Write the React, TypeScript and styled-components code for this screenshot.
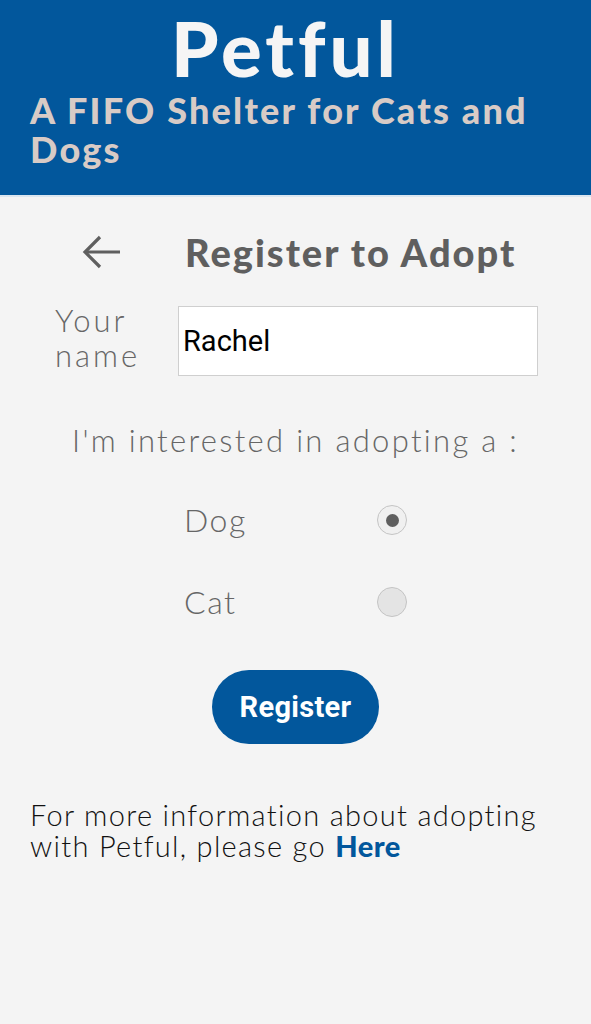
import React from "react";
import styled, { createGlobalStyle } from "styled-components";

const Global = createGlobalStyle`
  html, body { margin: 0; padding: 0; background: #f4f4f4; }
  body { font-family: "Lato", "Open Sans", sans-serif; }
`;

const Page = styled.div`
  width: 591px;
  min-height: 1024px;
  background: #f4f4f4;
`;

const Header = styled.header`
  background: #02579c;
  height: 197px;
  box-sizing: border-box;
  padding: 5px 30px 0;
  border-bottom: 2px solid #dbe6f0;
`;

const Title = styled.h1`
  margin: 0;
  padding-right: 20px;
  text-align: center;
  color: #f5f5f5;
  font-family: "Lato", sans-serif;
  font-weight: 900;
  font-size: 76px;
  line-height: 86px;
  letter-spacing: 4px;
`;

const Subtitle = styled.h2`
  margin: 0;
  color: #d8cbc6;
  font-family: "Lato", sans-serif;
  font-weight: 900;
  font-size: 36px;
  line-height: 39px;
  letter-spacing: 2.2px;
`;

const Main = styled.main`
  display: flex;
  flex-direction: column;
  align-items: center;
  padding-top: 27px;
`;

const TitleRow = styled.div`
  display: flex;
  align-items: center;
  width: 100%;
  box-sizing: border-box;
  padding-left: 80px;
  gap: 63px;
  height: 56px;
`;

const BackButton = styled.button`
  background: none;
  border: 0;
  padding: 0;
  width: 42px;
  height: 42px;
  display: flex;
  align-items: center;
  justify-content: center;
  color: #5f5f5f;
  cursor: pointer;
`;

const PageTitle = styled.h2`
  margin: 0;
  color: #5f5f5f;
  font-weight: 900;
  font-size: 38px;
  letter-spacing: 2px;
`;

const NameRow = styled.label`
  display: flex;
  align-items: center;
  width: 100%;
  height: 70px;
  box-sizing: border-box;
  padding-left: 55px;
  margin-top: 26px;
`;

const NameLabel = styled.span`
  color: #666;
  font-weight: 300;
  font-size: 31px;
  line-height: 35px;
  letter-spacing: 3px;
  width: 123px;
  padding-bottom: 7px;
`;

const NameInput = styled.input`
  width: 360px;
  height: 70px;
  box-sizing: border-box;
  border: 1px solid #cfcfcf;
  background: #fff;
  font-family: "Roboto", sans-serif;
  font-size: 29px;
  color: #000;
  padding: 0 4px;
  outline: none;
`;

const Question = styled.p`
  margin: 46px 0 0;
  color: #666;
  font-weight: 300;
  font-size: 31px;
  letter-spacing: 2.3px;
  line-height: 36px;
`;

const Options = styled.div`
  display: grid;
  grid-template-columns: 193px 30px;
  row-gap: 52px;
  align-items: center;
  margin-top: 47px;
`;

const OptionLabel = styled.span`
  color: #666;
  font-weight: 300;
  font-size: 32px;
  letter-spacing: 1.5px;
  line-height: 30px;
`;

const Radio = styled.span<{ $checked?: boolean }>`
  width: 30px;
  height: 30px;
  border-radius: 50%;
  border: 1px solid #c4c4c4;
  background: ${(p) => (p.$checked ? "#f0f0f0" : "#e4e4e4")};
  box-sizing: border-box;
  display: flex;
  align-items: center;
  justify-content: center;
  &::after {
    content: "";
    width: 13px;
    height: 13px;
    border-radius: 50%;
    background: #5f5f5f;
    display: ${(p) => (p.$checked ? "block" : "none")};
  }
`;

const RegisterButton = styled.button`
  margin-top: 53px;
  width: 167px;
  height: 74px;
  border: 0;
  border-radius: 37px;
  background: #02579c;
  color: #fff;
  font-family: "Roboto", sans-serif;
  font-weight: 700;
  font-size: 29px;
  letter-spacing: 0.3px;
  cursor: pointer;
`;

const Info = styled.p`
  margin: 55px 0 0;
  padding: 0 30px;
  align-self: stretch;
  color: #111;
  font-weight: 300;
  font-size: 29px;
  line-height: 31px;
  letter-spacing: 1.3px;
`;

const Link = styled.a`
  color: #02579c;
  font-weight: 900;
  letter-spacing: 0.5px;
  text-decoration: none;
`;

export default function App() {
  return (
    <Page>
      <Global />
      <Header>
        <Title>Petful</Title>
        <Subtitle>A FIFO Shelter for Cats and Dogs</Subtitle>
      </Header>
      <Main>
        <TitleRow>
          <BackButton aria-label="Back">
            <svg width="40" height="36" viewBox="0 0 40 36" fill="none" stroke="currentColor" strokeWidth="3.2" strokeLinecap="butt">
              <path d="M39 18H4" />
              <path d="M19 3L4 18l15 15" />
            </svg>
          </BackButton>
          <PageTitle>Register to Adopt</PageTitle>
        </TitleRow>
        <NameRow>
          <NameLabel>Your name</NameLabel>
          <NameInput defaultValue="Rachel" />
        </NameRow>
        <Question>I'm interested in adopting a :</Question>
        <Options>
          <OptionLabel>Dog</OptionLabel>
          <Radio $checked />
          <OptionLabel>Cat</OptionLabel>
          <Radio />
        </Options>
        <RegisterButton>Register</RegisterButton>
        <Info>
          For more information about adopting with Petful, please go <Link href="#">Here</Link>
        </Info>
      </Main>
    </Page>
  );
}
